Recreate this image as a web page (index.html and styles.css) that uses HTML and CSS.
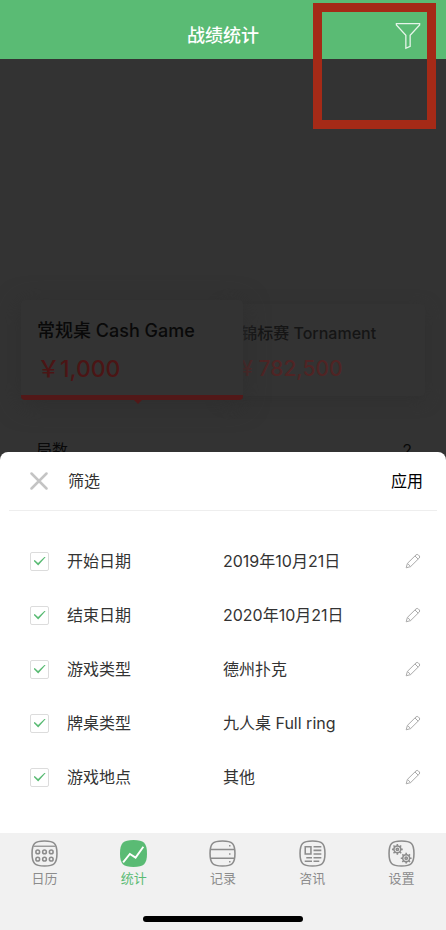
FILE: index.html
```html
<!DOCTYPE html>
<html lang="zh-CN">
<head>
<meta charset="utf-8">
<meta name="viewport" content="width=device-width, initial-scale=1">
<title>战绩统计</title>
<link rel="stylesheet" href="styles.css">
</head>
<body>
<svg class="defs" aria-hidden="true">
  <symbol id="pencil" viewBox="0 0 16 16">
    <path d="M1.2 14.8 2.4 10.4 11 1.9Q12.2.8 13.4 2L14.2 2.8Q15.3 4 14.2 5.1L5.6 13.6ZM2.6 10.5 5.5 13.4M10 3 13.1 6.1"/>
  </symbol>
  <symbol id="gear" viewBox="-6 -6 12 12">
    <circle r="3.3"/><circle r="1.1"/>
    <path d="M0-3.3V-5.2M0 3.3V5.2M-3.3 0H-5.2M3.3 0H5.2M2.3-2.3 3.7-3.7M-2.3-2.3-3.7-3.7M2.3 2.3 3.7 3.7M-2.3 2.3-3.7 3.7"/>
  </symbol>
</svg>
<div class="app">
  <header class="header">
    <h1 class="title">战绩统计</h1>
    <button class="filter" type="button" aria-label="筛选">
      <svg viewBox="0 0 26 26"><path d="M2.2 1.5H23.8V2.8L15 12.4V22.5L11 24.4V12.4L2.2 2.8Z"/></svg>
    </button>
  </header>
  <div class="highlight"></div>

  <main class="stats">
    <div class="chart"></div>
    <div class="cards">
      <section class="card card-active">
        <h2 class="card-title">常规桌 Cash Game</h2>
        <p class="card-amount">￥1,000</p>
      </section>
      <section class="card card-back">
        <h2 class="card-title">锦标赛 Tornament</h2>
        <p class="card-amount">¥ 782,500</p>
      </section>
    </div>
    <div class="stat-row"><span>局数</span><span>2</span></div>
  </main>

  <div class="sheet-wrap">
    <form class="sheet">
      <div class="sheet-head">
        <button class="close" type="button" aria-label="关闭">
          <svg viewBox="0 0 18 18"><path d="M1.5 1.5 16.5 16.5M16.5 1.5 1.5 16.5"/></svg>
        </button>
        <h2 class="sheet-title">筛选</h2>
        <button class="apply" type="button">应用</button>
      </div>
      <div class="rows">
        <div class="row"><input class="check" type="checkbox" id="start" checked><label for="start">开始日期</label><span class="value">2019年10月21日</span><button class="edit" type="button" aria-label="编辑开始日期"><svg><use href="#pencil"/></svg></button></div>
        <div class="row"><input class="check" type="checkbox" id="end" checked><label for="end">结束日期</label><span class="value">2020年10月21日</span><button class="edit" type="button" aria-label="编辑结束日期"><svg><use href="#pencil"/></svg></button></div>
        <div class="row"><input class="check" type="checkbox" id="game" checked><label for="game">游戏类型</label><span class="value">德州扑克</span><button class="edit" type="button" aria-label="编辑游戏类型"><svg><use href="#pencil"/></svg></button></div>
        <div class="row"><input class="check" type="checkbox" id="table" checked><label for="table">牌桌类型</label><span class="value">九人桌 Full ring</span><button class="edit" type="button" aria-label="编辑牌桌类型"><svg><use href="#pencil"/></svg></button></div>
        <div class="row"><input class="check" type="checkbox" id="place" checked><label for="place">游戏地点</label><span class="value">其他</span><button class="edit" type="button" aria-label="编辑游戏地点"><svg><use href="#pencil"/></svg></button></div>
      </div>
    </form>
  </div>

  <footer class="footer">
    <nav class="tabs">
      <a class="tab" href="#calendar">
        <svg viewBox="0 0 26 26"><path class="frame" d="M13 1C22.5 1 25 3.5 25 13S22.5 25 13 25 1 22.5 1 13 3.5 1 13 1Z"/><path d="M2.5 6H23.5"/><g class="bold"><circle cx="6.5" cy="11.5" r="1.8"/><circle cx="13" cy="11.5" r="1.8"/><circle cx="19.5" cy="11.5" r="1.8"/><circle cx="6.5" cy="18.5" r="1.8"/><circle cx="13" cy="18.5" r="1.8"/><circle cx="19.5" cy="18.5" r="1.8"/></g></svg>
        <span>日历</span>
      </a>
      <a class="tab tab-active" href="#stats">
        <svg viewBox="0 0 26 26"><path class="fill" d="M13 0C23 0 26 3 26 13S23 26 13 26 0 23 0 13 3 0 13 0Z"/><path class="trend" d="M3 21.5 9.5 13.5 15 17 22.5 6.5"/></svg>
        <span>统计</span>
      </a>
      <a class="tab" href="#records">
        <svg viewBox="0 0 26 26"><path class="frame" d="M13 1C22.5 1 25 3.5 25 13S22.5 25 13 25 1 22.5 1 13 3.5 1 13 1Z"/><path class="bold" d="M1.5 9.2H24.5M1.5 17.5H24.5M19.3 5.5H20.7M19.3 13.5H20.7M19.3 21H20.7"/></svg>
        <span>记录</span>
      </a>
      <a class="tab" href="#news">
        <svg viewBox="0 0 26 26"><path class="frame" d="M13 1C22.5 1 25 3.5 25 13S22.5 25 13 25 1 22.5 1 13 3.5 1 13 1Z"/><path class="bold" d="M6 6.5H11.5V13.5H6ZM14 6.5H21.5M14 10H21.5M14 13.5H21.5M7 17H12.5M14 17H21.5M5.5 20.5H12.5M14 20.5H19.5"/></svg>
        <span>咨讯</span>
      </a>
      <a class="tab" href="#settings">
        <svg viewBox="0 0 26 26"><path class="frame" d="M13 1C22.5 1 25 3.5 25 13S22.5 25 13 25 1 22.5 1 13 3.5 1 13 1Z"/><g class="bold"><use href="#gear" x="3" y="3" width="12" height="12"/><use href="#gear" x="11.5" y="11.5" width="12" height="12"/></g></svg>
        <span>设置</span>
      </a>
    </nav>
    <div class="home-bar"></div>
  </footer>
</div>
</body>
</html>
```
FILE: styles.css
```css
* {
  box-sizing: border-box;
}

body {
  margin: 0;
  font-family: Inter, "Noto Sans CJK SC", sans-serif;
  font-size: 16px;
  line-height: 24px;
  color: #333;
}

h1,
h2,
p {
  margin: 0;
}

button {
  padding: 0;
  border: 0;
  background: none;
  font: inherit;
  color: inherit;
}

svg {
  display: block;
  fill: none;
  stroke: currentColor;
}

.defs {
  position: absolute;
  width: 0;
  height: 0;
}

.app {
  position: relative;
  display: flex;
  flex-direction: column;
  height: 100vh;
  background: #333;
}

.header {
  display: grid;
  grid-template-columns: 1fr auto 1fr;
  align-items: center;
  flex: none;
  padding: 22px 24px 9px;
  background: #5abb74;
  color: #fff;
}

.title {
  grid-column: 2;
  font-size: 18px;
  line-height: 28px;
  font-weight: 500;
}

.filter {
  justify-self: end;
}

.filter svg {
  width: 28px;
  height: 28px;
  stroke-width: 1.2;
  opacity: 0.85;
}

.highlight {
  position: absolute;
  top: 3px;
  right: 10px;
  z-index: 3;
  width: 123px;
  height: 126px;
  border: 9px solid #a52a17;
  pointer-events: none;
}

.stats {
  flex: 1 1 0;
  min-height: 0;
  overflow: hidden;
}

.chart {
  height: 241px;
}

.cards {
  display: grid;
  grid-template-columns: 55fr 45fr;
  align-items: center;
  padding: 0 21px;
}

.card {
  border-radius: 4px;
  background: #333;
}

.card-active {
  position: relative;
  z-index: 1;
  height: 100px;
  padding: 17px 16px 0;
  border-bottom: 5px solid #521818;
  box-shadow: 0 4px 24px #2e2e2e;
}

.card-active::after {
  content: "";
  position: absolute;
  top: 100%;
  left: 50%;
  border: 5px solid transparent;
  border-top-color: #521818;
  margin: 4px 0 0 1px;
}

.card-back {
  height: 92px;
  margin-left: -20px;
  padding: 17px 0 0 18px;
  box-shadow: 0 4px 16px #303030;
  white-space: nowrap;
}

.card-title {
  font-size: 18px;
  line-height: 28px;
  font-weight: 500;
  color: #090909;
}

.card-amount {
  margin-top: 10px;
  font-size: 23px;
  line-height: 28px;
  font-weight: 500;
  color: #4b1515;
}

.card-back .card-title {
  font-size: 16px;
  line-height: 24px;
  color: #151515;
}

.card-back .card-amount {
  font-size: 21px;
  color: #502424;
}

.stat-row {
  display: flex;
  justify-content: space-between;
  margin-top: 38px;
  padding: 0 34px 0 36px;
  color: #090909;
}

.sheet-wrap {
  flex: none;
  background: #333;
}

.sheet {
  border-radius: 8px 8px 0 0;
  background: #fff;
}

.sheet-head {
  display: flex;
  align-items: center;
  height: 59px;
  margin: 0 9px;
  padding: 0 14px 0 21px;
  border-bottom: 1px solid #eee;
}

.close {
  color: #c4c4c4;
}

.close svg {
  width: 18px;
  height: 18px;
  stroke-width: 2.5;
  stroke-linecap: round;
}

.sheet-title {
  margin-left: 20px;
  font-size: 16px;
  font-weight: 400;
}

.apply {
  margin-left: auto;
  color: #000;
}

.rows {
  padding: 23px 25px 29px 30px;
}

.row {
  display: grid;
  grid-template-columns: 37px 6fr 7fr 16px;
  align-items: center;
  height: 54px;
}

.check {
  display: grid;
  place-items: center;
  appearance: none;
  width: 19px;
  height: 19px;
  margin: 0;
  border: 1px solid #dcdcdc;
  border-radius: 2px;
  background: #fff;
}

.check:checked::before {
  content: "";
  width: 12px;
  height: 9px;
  background: #5abb74;
  clip-path: polygon(0 48%, 10% 40%, 38% 72%, 95% 0, 100% 8%, 39% 100%);
}

.edit {
  color: #aaa;
}

.edit svg {
  width: 16px;
  height: 16px;
}

.footer {
  flex: none;
  padding: 7px 0 8px;
  background: #f1f1f1;
}

.tabs {
  display: grid;
  grid-template-columns: repeat(5, 1fr);
}

.tab {
  display: flex;
  flex-direction: column;
  align-items: center;
  font-size: 13px;
  line-height: 20px;
  color: #8c8c8c;
  text-decoration: none;
}

.tab svg {
  width: 27px;
  height: 27px;
  margin-bottom: 1px;
  stroke-width: 1.2;
}

.tab .frame,
.tab .bold {
  stroke-width: 1.5;
}

.tab-active {
  color: #5abb74;
}

.tab .fill {
  fill: currentColor;
  stroke: none;
}

.tab .trend {
  stroke: #fff;
  stroke-width: 1.8;
}

.home-bar {
  width: 36%;
  height: 6px;
  margin: 28px auto 0;
  border-radius: 3px;
  background: #000;
}
```
